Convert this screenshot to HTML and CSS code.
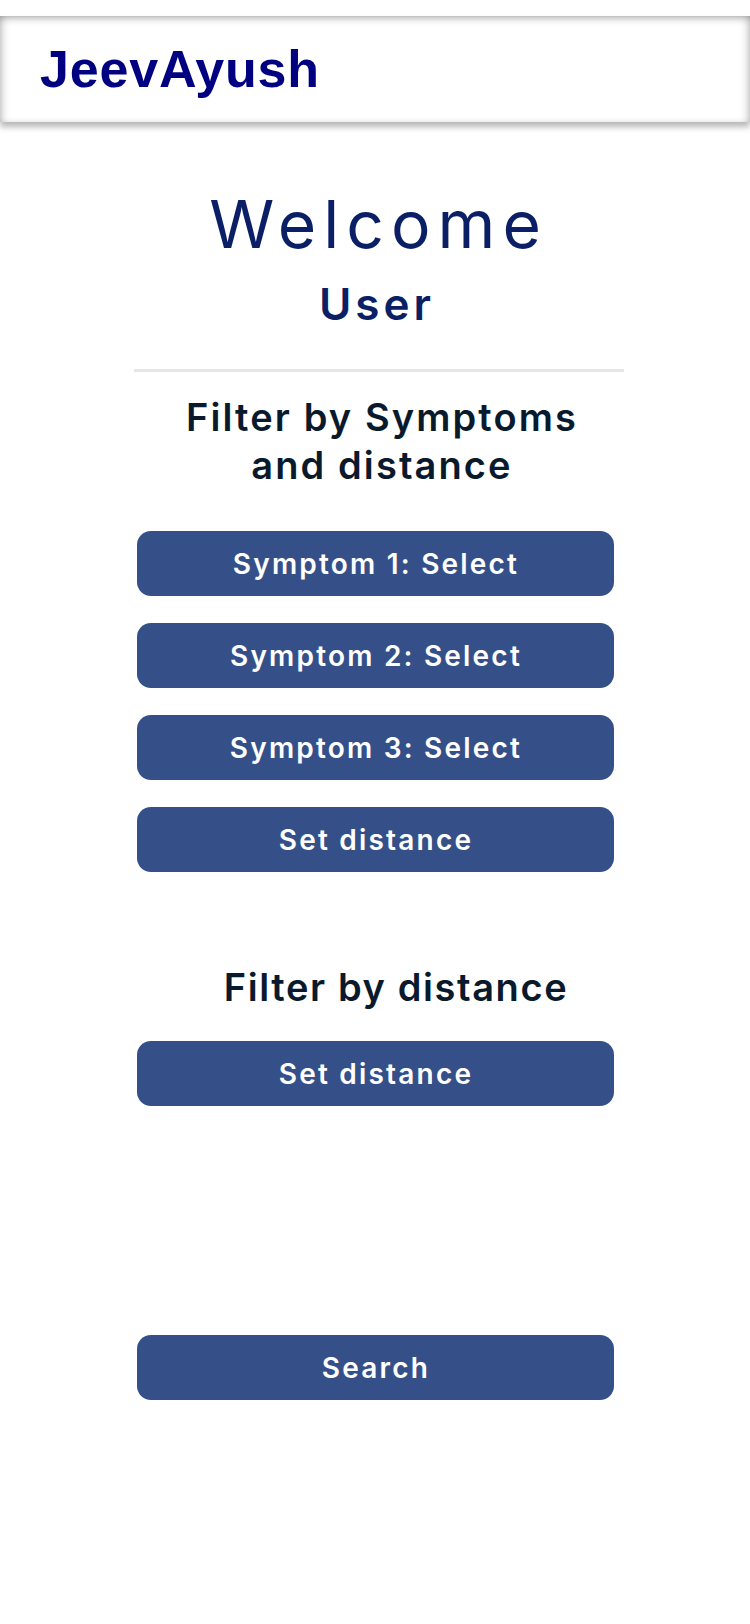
FILE: index.html
```html
<!DOCTYPE html>
<html lang="en">
<head>
<meta charset="utf-8">
<title>JeevAyush</title>
<link rel="stylesheet" href="styles.css">
</head>
<body>
  <header class="topbar">
    <span class="brand">JeevAyush</span>
  </header>
  <main class="content">
    <h1 class="welcome">Welcome</h1>
    <h2 class="user">User</h2>
    <hr class="divider">
    <section class="panel">
      <h3 class="section-title section-title-main">Filter by Symptoms<br>and distance</h3>
      <div class="btn-list">
        <button class="btn">Symptom 1: Select</button>
        <button class="btn">Symptom 2: Select</button>
        <button class="btn">Symptom 3: Select</button>
        <button class="btn btn-last">Set distance</button>
      </div>
    </section>
    <section class="panel panel-distance">
      <h3 class="section-title section-title-offset">Filter by distance</h3>
      <div class="btn-list">
        <button class="btn">Set distance</button>
      </div>
    </section>
    <div class="search-row">
      <button class="btn">Search</button>
    </div>
  </main>
</body>
</html>
```
FILE: styles.css
```css
* { box-sizing: border-box; }

html, body {
  margin: 0;
  padding: 0;
  background: #ffffff;
}

body {
  width: 750px;
  min-height: 1624px;
  font-family: "Inter", "Noto Sans", sans-serif;
  padding-top: 16px;
}

.topbar {
  height: 106px;
  display: flex;
  align-items: center;
  padding-left: 40px;
  background: #ffffff;
  box-shadow: inset 0 6px 8px -4px rgba(0,0,0,0.28),
              inset 6px 0 8px -4px rgba(0,0,0,0.22),
              inset -6px 0 8px -4px rgba(0,0,0,0.22),
              0 5px 6px rgba(0,0,0,0.28);
}

.brand {
  font-family: "Liberation Sans", Arial, sans-serif;
  font-weight: 700;
  font-size: 52px;
  letter-spacing: 0.8px;
  line-height: 1;
  color: #000080;
}

.content {
  display: flex;
  flex-direction: column;
  align-items: center;
}

.welcome {
  margin: 64px -7px 0 0;
  font-size: 66px;
  font-weight: 400;
  letter-spacing: 7px;
  line-height: 77px;
  color: #0b1f66;
}

.user {
  margin: 15px -4px 0 0;
  font-size: 44px;
  font-weight: 600;
  letter-spacing: 4px;
  line-height: 53px;
  color: #0b1f66;
}

.divider {
  width: 490px;
  height: 3px;
  margin: 38px 0 0 8px;
  border: 0;
  background: #e6e6e6;
}

.panel {
  display: flex;
  flex-direction: column;
  align-items: center;
}

.section-title {
  margin: 21px -2px 0 0;
  font-size: 38px;
  font-weight: 600;
  letter-spacing: 2.1px;
  line-height: 48px;
  text-align: center;
  color: #0a1a2d;
}

.section-title-main {
  padding-left: 12px;
}

.btn-list {
  display: flex;
  flex-direction: column;
  gap: 27px;
  margin-top: 42px;
}

.btn {
  display: block;
  width: 477px;
  height: 65px;
  border: 0;
  border-radius: 14px;
  background: #355089;
  color: #ffffff;
  font-family: "Inter", "Noto Sans", sans-serif;
  font-size: 28px;
  font-weight: 600;
  letter-spacing: 2.2px;
  text-align: center;
  padding: 0 0 0 2px;
}

.btn-last {
  margin-top: 0;
}

.panel-distance .section-title {
  margin-top: 92px;
  line-height: 47px;
  letter-spacing: 1.6px;
}

.section-title-offset {
  padding-left: 40px;
}

.panel-distance .btn-list {
  margin-top: 30px;
}

.search-row {
  margin-top: 229px;
}
```
